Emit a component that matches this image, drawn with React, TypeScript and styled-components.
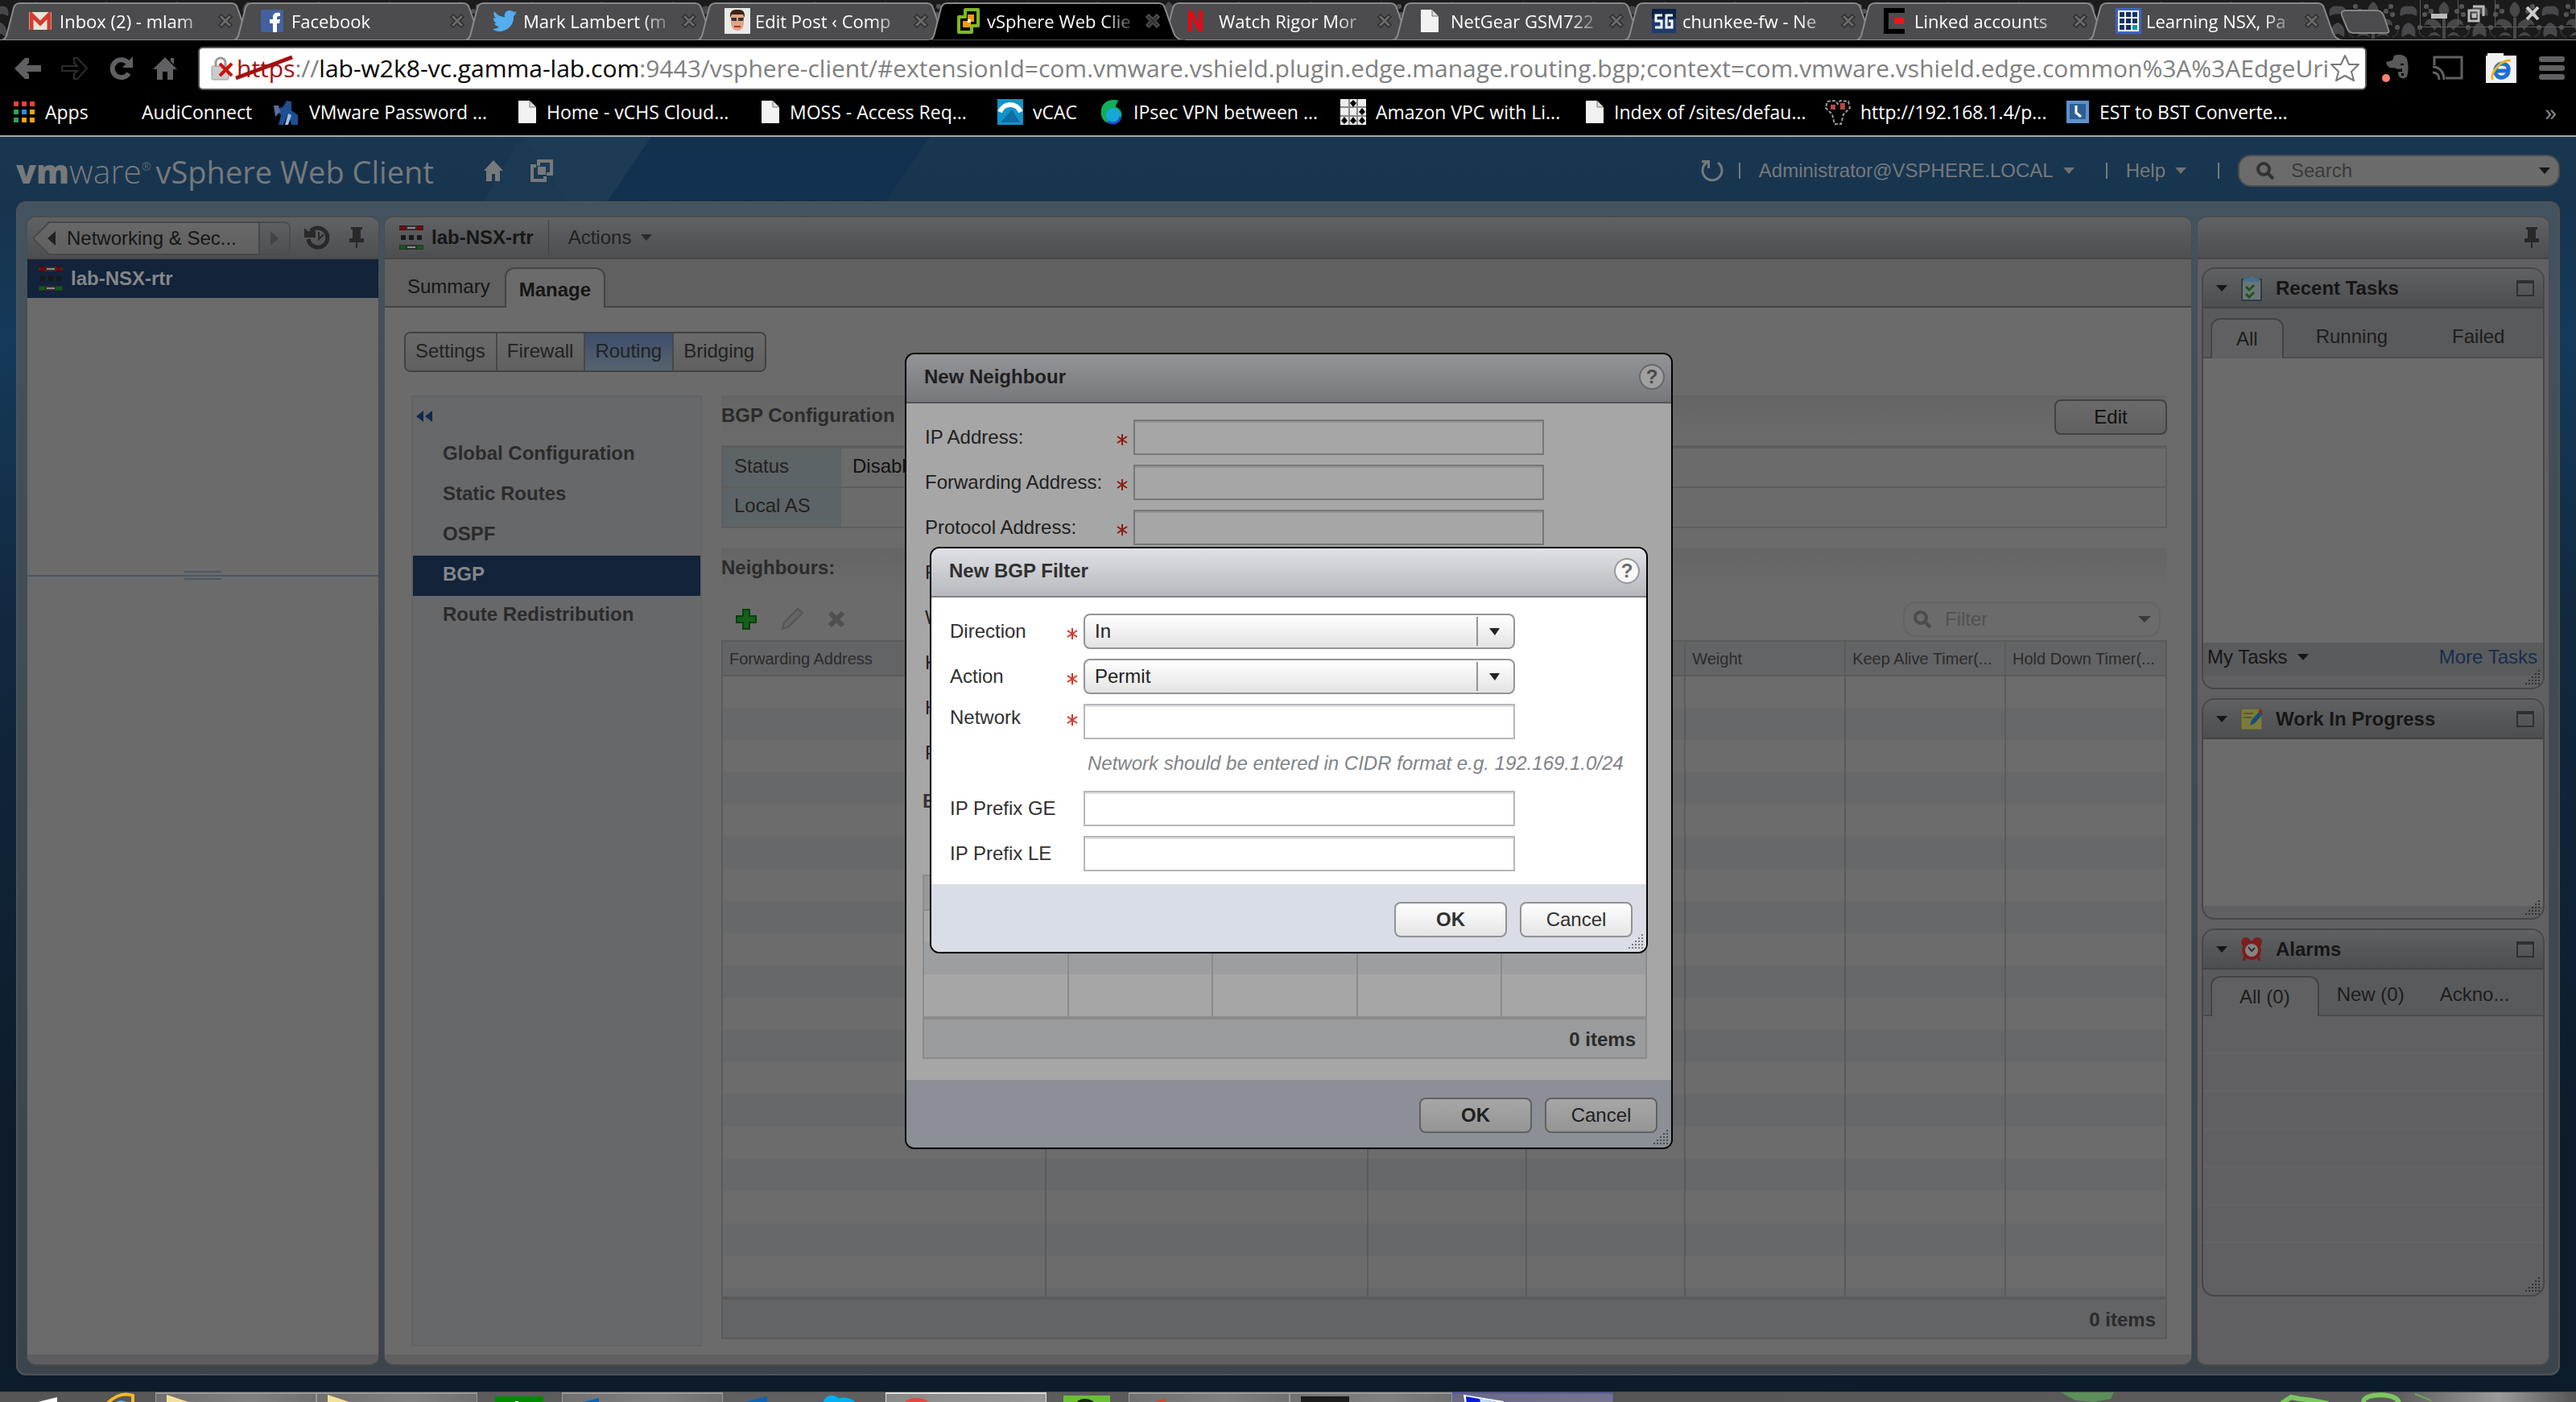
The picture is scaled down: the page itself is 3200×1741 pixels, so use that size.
import React from "react";
import styled, { createGlobalStyle, css } from "styled-components";

const ui = `"Liberation Sans", Arial, sans-serif`;
const chrome = `"Open Sans", "Noto Sans", sans-serif`;

const Global = createGlobalStyle`
  *, *::before, *::after { box-sizing: border-box; }
  body { margin: 0; background: #000; font: 24px/28px ${ui}; color: #161616; overflow: hidden; }
  button, input, select { font: inherit; color: inherit; }
  button { background: none; border: 0; padding: 0; }
  a { text-decoration: none; color: inherit; }
  svg { display: block; flex: none; }
`;

/* ---------- browser window ---------- */

const Page = styled.div`
  height: 100vh;
  display: flex;
  flex-direction: column;
`;

const Strip = styled.header`
  position: relative;
  height: 50px;
  padding: 2px 0 0 10px;
  display: flex;
  background: #1b1b1c;
  border-bottom: 1px solid #8e8e8e;
  font: 22px/30px ${chrome};
  color: #fff;
`;

const Damask = styled.svg`
  position: absolute;
  inset: 0;
  width: 100%;
  height: 49px;
`;

const Tabs = styled.nav`
  position: relative;
  flex: 1;
  min-width: 0;
  display: flex;
`;

const TabItem = styled.button<{ $on?: boolean }>`
  position: relative;
  flex: 1 1 0;
  min-width: 0;
  height: 48px;
  padding: 0 4px 0 26px;
  display: flex;
  align-items: center;
  text-align: left;
  z-index: ${(p) => (p.$on ? 2 : 1)};
`;

const TabShape = styled.svg`
  position: absolute;
  left: -8px;
  top: 0;
  width: calc(100% + 30px);
  height: 48px;
`;

const TabIcon = styled.span`
  position: relative;
  width: 38px;
`;

const TabLabel = styled.span`
  position: relative;
  flex: 1;
  overflow: hidden;
  white-space: nowrap;
  mask-image: linear-gradient(90deg, #000 80%, rgba(0, 0, 0, 0.2));
`;

const TabClose = styled.span`
  position: relative;
  margin-left: 14px;
  width: 24px;
`;

const StripEnd = styled.div`
  position: relative;
  width: 310px;
  flex: none;
  display: flex;
  justify-content: space-between;
  padding: 9px 0 0 18px;
`;

const WindowButtons = styled.div`
  display: flex;
  width: 194px;
  height: 34px;
  margin-top: -11px;
  border: 1px solid #5a5a5c;
  border-top: 0;
`;

const WindowButton = styled.button`
  flex: 1;
  display: grid;
  place-items: center;
  & + & { border-left: 1px solid #5a5a5c; }
  &:last-child { flex: 2; padding-right: 8px; }
`;

const Toolbar = styled.div`
  height: 70px;
  display: flex;
  align-items: center;
  padding: 0 14px 0 14px;
  background: #000;
`;

const NavButtons = styled.div`
  width: 232px;
  flex: none;
  display: flex;
  gap: 20px;
`;

const Omnibox = styled.div`
  flex: 1;
  min-width: 0;
  height: 54px;
  padding: 0 6px 0 14px;
  display: flex;
  align-items: center;
  background: #fff;
  border: 2px solid #555;
  border-radius: 6px;
  font: 30px/40px ${chrome};
  color: #808080;
`;

const Url = styled.span`
  flex: 1;
  margin-left: 4px;
  white-space: nowrap;
`;

const Bad = styled.span`
  position: relative;
  color: #a40f10;
`;

const Slash = styled.svg`
  position: absolute;
  left: -2px;
  top: 4px;
`;

const Host = styled.span`
  color: #000;
`;

const Extensions = styled.div`
  width: 246px;
  flex: none;
  padding-left: 18px;
  display: flex;
  align-items: center;
  justify-content: space-between;
`;

const Bookmarks = styled.nav`
  height: 50px;
  padding: 0 24px 10px 16px;
  display: flex;
  align-items: center;
  background: #000;
  border-bottom: 2px solid #a9a9a9;
  font: 23px/30px ${chrome};
  color: #fff;
`;

const Bookmark = styled.a<{ $w: number }>`
  width: ${(p) => p.$w}px;
  display: flex;
  align-items: center;
  gap: 12px;
  white-space: nowrap;
`;

const More = styled.span`
  margin-left: auto;
  font-size: 30px;
  color: #888;
`;

/* ---------- vSphere client ---------- */

const Client = styled.div`
  position: relative;
  flex: 1;
  min-height: 0;
  display: flex;
  flex-direction: column;
  padding: 0 20px 20px;
  background: linear-gradient(#1a3751, #17344f 6%, #143a5a 16%, #12273d 40%, #0c1c2b 80%);
`;

const Rays = styled.svg`
  position: absolute;
  left: 0;
  top: 0;
`;

const ClientBar = styled.div`
  position: relative;
  height: 80px;
  padding-top: 4px;
  display: flex;
  align-items: center;
  color: #77797b;
`;

const Logo = styled.div`
  display: flex;
  align-items: baseline;
  font: 300 41px/60px ${chrome};
  width: 581px;
`;

const LogoBold = styled.b`
  font-weight: 800;
`;

const LogoMark = styled.sup`
  align-self: flex-start;
  padding-top: 15px;
  margin-right: 6px;
  font-size: 14px;
  line-height: 20px;
`;

const LogoName = styled.span`
  font-size: 38px;
  font-weight: 500;
  white-space: nowrap;
`;

const BarIcons = styled.div`
  display: flex;
  gap: 34px;
`;

const BarRight = styled.div`
  margin-left: auto;
  display: flex;
  align-items: center;
`;

const Sep = styled.span<{ $near?: boolean }>`
  width: 2px;
  height: 20px;
  margin: 0 23px 0 ${(p) => (p.$near ? 18 : 39)}px;
  background: #77797b;
`;

const MenuButton = styled.button`
  display: flex;
  align-items: center;
  gap: 12px;
`;

const SearchBox = styled.label`
  width: 400px;
  height: 40px;
  padding: 0 10px 0 20px;
  display: flex;
  align-items: center;
  gap: 20px;
  background: #6b6b6b;
  border: 2px solid #4a4d50;
  border-radius: 16px;
`;

const BareInput = styled.input`
  flex: 1;
  min-width: 0;
  height: 30px;
  padding: 0;
  border: 0;
  outline: 0;
  background: none;
  &::placeholder { color: ${(p) => p.color || "#3b3b3b"}; opacity: 1; }
`;

const Frame = styled.div`
  position: relative;
  flex: 1;
  min-height: 0;
  display: grid;
  grid-template-columns: 438px minmax(0, 1fr) 438px;
  gap: 6px;
  padding: 16px 11px 10px;
  border: 2px solid #505355;
  border-radius: 12px;
  background: linear-gradient(#43535f, #3e4850 60%, #3c454c);
`;

const Panel = styled.section<{ $bg: string; $foot: string }>`
  min-height: 0;
  display: flex;
  flex-direction: column;
  overflow: hidden;
  border: 2px solid #4b4c4d;
  border-radius: 12px;
  background: ${(p) => p.$bg};
  border-left-width: 1px;
  border-right-width: 1px;
  &::after { content: ""; height: 12px; flex: none; background: ${(p) => p.$foot}; }
`;

const PanelHead = styled.div`
  height: 52px;
  flex: none;
  display: flex;
  align-items: center;
  border-bottom: 2px solid #474747;
  background: linear-gradient(#616265, #4d4e50);
`;

const BackButton = styled.button`
  position: relative;
  width: 283px;
  height: 42px;
  margin: 2px 0 0 6px;
  padding-left: 43px;
  text-align: left;
  background: linear-gradient(#686868, #606060);
  border: 2px solid #484848;
  border-left: 0;
  clip-path: polygon(20px 0, 100% 0, 100% 100%, 20px 100%, 0 50%);
`;

const BackArrow = styled.svg`
  position: absolute;
  left: 0;
  top: -2px;
`;

const NextButton = styled.button`
  width: 38px;
  height: 42px;
  margin-top: 2px;
  display: grid;
  place-items: center;
  border: 2px solid #4c4c4c;
  border-left: 0;
  border-radius: 0 8px 8px 0;
`;

const HeadIcons = styled.div`
  display: flex;
  align-items: center;
  gap: 22px;
  margin-left: 17px;
`;

const TreeRow = styled.a`
  height: 48px;
  flex: none;
  padding-left: 14px;
  display: flex;
  align-items: center;
  gap: 10px;
  background: #12233a;
  color: #858789;
  font-weight: bold;
`;

const TreeSpace = styled.div`
  height: 346px;
  border-bottom: 2px solid #4a5767;
`;

const Grip = styled.svg`
  align-self: center;
  margin-top: -7px;
`;

const Fill = styled.div`
  flex: 1;
  min-height: 0;
`;

const ObjectTitle = styled.h1`
  margin: 0;
  padding: 0 18px;
  height: 42px;
  display: flex;
  align-items: center;
  gap: 10px;
  font: bold 24px/28px ${ui};
  border-right: 1px solid #404040;
`;

const Actions = styled(MenuButton)`
  margin-left: 24px;
  color: #222;
`;

const MainTabs = styled.nav`
  height: 60px;
  flex: none;
  display: flex;
  align-items: flex-end;
  padding-left: 10px;
  background: #606060;
  box-shadow: inset 0 -2px #444;
`;

const MainTab = styled.button<{ $on?: boolean }>`
  height: 50px;
  ${(p) =>
    p.$on
      ? css`
          padding: 3px 16px 0;
          font-weight: bold;
          background: #6b6b6b;
          border: 2px solid #444;
          border-bottom: 0;
          border-radius: 12px 12px 0 0;
        `
      : css`
          padding: 0 18px 3px;
        `}
`;

const MainBody = styled.div`
  flex: 1;
  min-height: 0;
  display: flex;
  flex-direction: column;
  padding: 30px 30px 10px 24px;
`;

const Segments = styled.div`
  align-self: flex-start;
  height: 50px;
  flex: none;
  display: flex;
  border: 2px solid #414141;
  border-radius: 8px;
  overflow: hidden;
`;

const Segment = styled.button<{ $on?: boolean }>`
  padding: 0 13px 3px 12px;
  color: #222;
  background: ${(p) => (p.$on ? "linear-gradient(#3e4d6c, #56646f)" : "linear-gradient(#6b6b6b, #606060)")};
  & + & { border-left: 2px solid #484848; }
`;

const Split = styled.div`
  flex: 1;
  min-height: 0;
  display: grid;
  grid-template-columns: 361px minmax(0, 1fr);
  gap: 24px;
  margin: 29px 0 0 9px;
`;

const Side = styled.nav`
  background: #67686a;
  border: 2px solid #626366;
  font-weight: bold;
  color: #2b2b2b;
`;

const Collapse = styled.button`
  display: block;
  height: 47px;
  padding: 0 4px;
`;

const SideLink = styled.a<{ $on?: boolean }>`
  height: 50px;
  padding: 0 37px 4px;
  display: flex;
  align-items: center;
  ${(p) => p.$on && "background: #12233a; color: #858789;"}
`;

const Content = styled.div`
  min-height: 0;
  margin-bottom: 9px;
  display: flex;
  flex-direction: column;
`;

const Band = styled.div`
  height: 58px;
  flex: none;
  display: flex;
  justify-content: space-between;
  align-items: flex-start;
  background: linear-gradient(#656565, #6b6b6b);
`;

const BandTitle = styled.h2`
  margin: 0;
  padding-top: 11px;
  font: bold 24px/28px ${ui};
  color: #2b2b2b;
`;

const EditButton = styled.button`
  width: 140px;
  height: 44px;
  margin-top: 5px;
  background: linear-gradient(#6b6b6b, #606060);
  border: 2px solid #424242;
  border-radius: 8px;
  color: #111;
`;

const InfoTable = styled.table`
  width: 100%;
  flex: none;
  margin: 4px 0 24px;
  border-collapse: collapse;
  border: 2px solid #5e5e5e;
  border-top-width: 4px;
  th { width: 148px; background: #5c6467; font-weight: normal; color: #222; }
  td { color: #111; }
  th, td { height: 50px; padding: 0 13px 4px 14px; text-align: left; border-bottom: 2px solid #5e5e5e; }
`;

const Tools = styled.div`
  height: 57px;
  flex: none;
  display: flex;
  align-items: center;
  padding: 5px 8px 0 18px;
`;

const ToolButtons = styled.div`
  display: flex;
  gap: 30px;
  align-items: center;
  margin-right: auto;
`;

const FilterBox = styled.label`
  width: 320px;
  height: 44px;
  padding: 0 10px 0 10px;
  display: flex;
  align-items: center;
  gap: 16px;
  border: 2px solid #646464;
  border-radius: 16px;
`;

const GridBox = styled.div<{ $line: string }>`
  flex: 1;
  min-height: 0;
  overflow: hidden;
  border: 2px solid ${(p) => p.$line};
  border-bottom: 0;
`;

const Grid = styled.table<{ $line: string; $head: string; $odd: string; $even: string }>`
  width: 100%;
  table-layout: fixed;
  border-collapse: collapse;
  th {
    height: 42px;
    padding: 0 8px;
    font: 20px/24px ${ui};
    text-align: left;
    white-space: nowrap;
    overflow: hidden;
    color: #2b2b2b;
    background: ${(p) => p.$head};
    border-bottom: 2px solid ${(p) => p.$line};
  }
  td { height: 40px; padding: 0; background: ${(p) => p.$odd}; }
  tr:nth-child(even) td { background: ${(p) => p.$even}; }
  th + th, td + td { border-left: 2px solid ${(p) => p.$line}; }
`;

const GridFoot = styled.div<{ $line: string; $bg: string }>`
  height: 53px;
  flex: none;
  padding: 3px 12px 0;
  display: flex;
  align-items: center;
  justify-content: flex-end;
  font-weight: bold;
  color: #2b2b2b;
  background: ${(p) => p.$bg};
  border: 2px solid ${(p) => p.$line};
  border-top-width: 4px;
`;

/* ---------- right column ---------- */

const Portlets = styled.div`
  flex: 1;
  min-height: 0;
  display: flex;
  flex-direction: column;
  gap: 11px;
  padding: 10px 5px;
`;

const Portlet = styled.section<{ $h: number }>`
  position: relative;
  height: ${(p) => p.$h}px;
  flex: none;
  display: flex;
  flex-direction: column;
  overflow: hidden;
  border: 2px solid #474748;
  border-radius: 16px;
  background: #606062;
`;

const PortletHead = styled.div`
  height: 49px;
  flex: none;
  display: flex;
  align-items: center;
  padding: 0 11px 0 16px;
  background: linear-gradient(#606163, #4d4e50);
  border-bottom: 2px solid #444;
`;

const PortletTitle = styled.h3`
  margin: 0 auto 0 16px;
  font: bold 24px/28px ${ui};
`;

const HeadTriangle = styled.span`
  width: 30px;
`;

const PortletTabs = styled.nav<{ $h: number }>`
  height: ${(p) => p.$h}px;
  flex: none;
  display: flex;
  align-items: flex-end;
  padding-left: 9px;
  background: #595a5c;
  box-shadow: inset 0 -2px #4c4c4c;
`;

const PortletTab = styled.button<{ $on?: boolean; $pad: number }>`
  height: 50px;
  padding: 0 ${(p) => p.$pad}px 4px;
  color: #1d1d1d;
  ${(p) =>
    p.$on &&
    css`
      padding-bottom: 0;
      background: #606062;
      border: 2px solid #444;
      border-bottom: 0;
      border-radius: 12px 12px 0 0;
    `}
`;

const PortletBody = styled.div`
  flex: 1;
  background: #6b6b6b;
`;

const AlarmBody = styled.div`
  flex: 1;
  background: repeating-linear-gradient(#606062 0 45px, #646466 45px 47px);
  max-height: 284px;
`;

const TaskFoot = styled.div`
  height: 41px;
  flex: none;
  display: flex;
  justify-content: space-between;
  align-items: flex-start;
  padding: 4px 7px 0 5px;
  background: #5a5b5d;
`;

const MoreTasks = styled.a`
  color: #172e4d;
`;

const PortletEdge = styled.div`
  height: 15px;
  flex: none;
`;

const Corner = styled.svg`
  position: absolute;
  right: 4px;
  bottom: 4px;
`;

/* ---------- dialogs ---------- */

const Layer = styled.div<{ $top: number }>`
  position: absolute;
  inset: 0;
  padding: ${(p) => p.$top}px 0 0 2px;
  display: flex;
  justify-content: center;
  align-items: flex-start;
`;

const Dialog = styled.form<{ $dim?: boolean; $w: number }>`
  position: relative;
  width: ${(p) => p.$w}px;
  border: 2px solid #000;
  border-radius: 12px;
  overflow: hidden;
  color: ${(p) => (p.$dim ? "#1f1f1f" : "#303030")};
  background: ${(p) => (p.$dim ? "#a6a6a6" : "#fff")};
`;

const DialogHead = styled.div<{ $dim?: boolean }>`
  height: 61px;
  display: flex;
  justify-content: space-between;
  align-items: center;
  padding: 0 8px 3px 22px;
  background: ${(p) => (p.$dim ? "linear-gradient(#939498, #77787c)" : "linear-gradient(#e0e1e6, #b7b8bd)")};
  border-bottom: 2px solid ${(p) => (p.$dim ? "#545557" : "#808184")};
`;

const DialogTitle = styled.h2`
  margin: 0;
  font: bold 24px/28px ${ui};
`;

const Help = styled.button<{ $dim?: boolean }>`
  width: 32px;
  height: 32px;
  border-radius: 50%;
  border: 2px solid ${(p) => (p.$dim ? "#66676a" : "#9a9a9c")};
  background: ${(p) => (p.$dim ? "#a0a0a1" : "#f7f7f7")};
  font-weight: bold;
  color: ${(p) => (p.$dim ? "#4a4a4a" : "#6c6c6c")};
`;

const Fields = styled.div`
  padding: 20px 23px 4px;
`;

const Field = styled.div<{ $label: number; $wide: number }>`
  height: 56px;
  display: grid;
  grid-template-columns: ${(p) => p.$label}px 21px ${(p) => p.$wide}px;
  align-items: start;
  white-space: nowrap;
`;

const Label = styled.label<{ $high?: boolean }>`
  padding-top: ${(p) => (p.$high ? 3 : 8)}px;
`;

const Star = styled.svg<{ $high?: boolean }>`
  margin-top: ${(p) => (p.$high ? 13 : 18)}px;
`;

const TextBox = styled.input<{ $dim?: boolean }>`
  width: 100%;
  height: 44px;
  padding: 0 12px;
  outline: 0;
  background: ${(p) => (p.$dim ? "#a6a6a6" : "#fff")};
  border: 2px solid ${(p) => (p.$dim ? "#767778" : "#b5b8bb")};
  box-shadow: inset 0 2px ${(p) => (p.$dim ? "#939393" : "#e2e2e2")};
`;

const Picker = styled.div`
  position: relative;
  height: 44px;
`;

const PickerSelect = styled.select`
  width: 100%;
  height: 44px;
  padding: 0 60px 0 12px;
  appearance: none;
  outline: 0;
  color: #222;
  background: linear-gradient(#fff, #e3e3e3);
  border: 2px solid #929497;
  border-radius: 8px;
`;

const PickerArrow = styled.svg`
  position: absolute;
  right: 0;
  top: 0;
  pointer-events: none;
`;

const Hint = styled.p`
  margin: 4px 0 20px 171px;
  font-style: italic;
  white-space: nowrap;
  color: #7f8388;
`;

const DialogFoot = styled.div<{ $dim?: boolean }>`
  height: 84px;
  display: flex;
  justify-content: flex-end;
  align-items: flex-start;
  gap: 16px;
  padding: 22px 17px 0;
  background: ${(p) => (p.$dim ? "#8c8f95" : "#d9dde6")};
`;

const DialogButton = styled.button<{ $dim?: boolean; $main?: boolean }>`
  width: 140px;
  height: 44px;
  border: 2px solid ${(p) => (p.$dim ? "#606163" : "#919396")};
  border-radius: 8px;
  font-weight: ${(p) => (p.$main ? "bold" : "normal")};
  background: ${(p) => (p.$dim ? "linear-gradient(#a6a6a6, #959595)" : "linear-gradient(#fff, #e4e4e4)")};
`;

const FilterTitle = styled.h3`
  margin: 12px 0 73px -3px;
  font: bold 24px/28px ${ui};
  color: #3a3235;
`;

const FilterGrid = styled.div`
  margin: 0 30px 0 20px;
  padding-bottom: 26px;
  tbody tr:last-child td { height: 52px; }
`;

/* ---------- taskbar ---------- */

const Taskbar = styled.footer`
  position: relative;
  height: 13px;
  flex: none;
  display: flex;
  overflow: hidden;
  background: linear-gradient(90deg, #555, #606060 30%, #555 60%, #5c5c5c 93%, #9a9a9a 97%, #555);
  border-top: 1px solid #4a4a4a;
`;

const Slot = styled.button<{ $w: number; $tile?: string; $line?: string }>`
  width: ${(p) => p.$w}px;
  height: 40px;
  flex: none;
  display: flex;
  align-items: flex-start;
  padding-left: 13px;
  ${(p) =>
    p.$tile &&
    css`
      background: ${p.$tile};
      border: 1px solid ${p.$line};
      border-top-width: 2px;
    `}
`;

const Splatter = styled.svg`
  margin-left: auto;
`;

/* ---------- drawings ---------- */

const Tri = ({ c = "#6f7173", w = 14 }: { c?: string; w?: number }) => (
  <svg width={w} height="8" viewBox="0 0 14 8" preserveAspectRatio="none"><path d="M0 0h14L7 8z" fill={c} /></svg>
);

const Cross = ({ on }: { on?: boolean }) => (
  <svg width="20" height="20" viewBox="0 0 20 20">
    <path d="M3 3l14 14M17 3L3 17" stroke={on ? "#555" : "#2c2c2c"} strokeWidth="6" />
    <path d="M4 4l12 12M16 4L4 16" stroke={on ? "#333" : "#6a6a6a"} strokeWidth="3" />
  </svg>
);

const PageIcon = () => (
  <svg width="24" height="28" viewBox="0 0 24 28">
    <path d="M1 0h14l8 8v20H1z" fill="#f2f2f2" /><path d="M15 0v8h8z" fill="#ddd" stroke="#777" />
  </svg>
);

const Magnifier = ({ c }: { c: string }) => (
  <svg width="24" height="24" viewBox="0 0 24 24" fill="none" stroke={c}>
    <circle cx="10" cy="10" r="7" strokeWidth="4" /><path d="M15 15l7 7" strokeWidth="4" />
  </svg>
);

const RouterIcon = () => (
  <svg width="30" height="30" viewBox="0 0 30 30">
    <path d="M0 0h30v6H0zM0 24h30v6H0z" fill="#2f2f2f" />
    <path d="M2 1h6v4H2zM22 1h6v4h-6z" fill="#760808" /><path d="M0 0h8v1H0zM22 0h8v1h-8zM0 5h8v1H0zM22 5h8v1h-8z" fill="#4c0808" /><path d="M10 2h10v2H10z" fill="#8a8a8a" />
    <path d="M2 12h6v6H2zM12 12h6v6h-6zM22 12h6v6h-6z" fill="#1a1a1a" />
    <path d="M1 25h7v4H1zM22 25h7v4h-7z" fill="#08600c" /><path d="M10 26h10v2H10z" fill="#8a8a8a" />
  </svg>
);

const PinIcon = () => (
  <svg width="18" height="26" viewBox="0 0 18 26"><path d="M2 0h14v3h-2v11h4v5h-8v7H8v-7H0v-5h4V3H2z" fill="#292929" /></svg>
);

const MaxIcon = () => (
  <svg width="22" height="20" viewBox="0 0 22 20"><path d="M1 2h20v17H1z" fill="none" stroke="#303030" strokeWidth="2" /><path d="M0 0h22v4H0z" fill="#303030" /></svg>
);

const Dots = ({ c }: { c: string }) => (
  <>
    {[0, 1, 2, 3, 4].flatMap((r) =>
      Array.from({ length: r + 1 }, (_, k) => <rect key={`${r}${k}`} x={16 - k * 4} y={r * 4} width="2" height="2" fill={c} />),
    )}
  </>
);

const StarMark = ({ dim, high }: { dim?: boolean; high?: boolean }) => (
  <Star $high={high} width="14" height="14" viewBox="0 0 14 14" stroke={dim ? "#8c1c14" : "#d5382b"} strokeWidth="2">
    <path d="M7 0v14M1 3l12 8M13 3L1 11" />
  </Star>
);

const Damasks = () => (
  <Damask>
    <defs>
      <pattern id="damask" width="88" height="50" patternUnits="userSpaceOnUse">
        <g fill="#48484a">
          <path d="M44 2c-8 6-9 14 0 20 9-6 8-14 0-20zM42 22h4v26h-4zM40 30c-8-10-20-8-20 2 4-4 10 0 12 6 2-4 6-6 8-2zM48 30c8-10 20-8 20 2-4-4-10 0-12 6-2-4-6-6-8-2z" />
          <path d="M24 46c4-8 12-8 16 0-6-3-11-3-16 0zM64 46c-4-8-12-8-16 0 6-3 11-3 16 0zM0 8c8-2 12 4 10 12C6 18 2 16 0 18zM88 8c-8-2-12 4-10 12 4-2 8-4 10-2zM0 28c6 2 10 8 8 18-4-2-6-4-8-4zM88 28c-6 2-10 8-8 18 4-2 6-4 8-4z" />
        </g>
        <g fill="#565658">
          <circle cx="22" cy="8" r="3" /><circle cx="28" cy="14" r="3" /><circle cx="20" cy="18" r="3" /><circle cx="66" cy="8" r="3" /><circle cx="60" cy="14" r="3" /><circle cx="68" cy="18" r="3" /><circle cx="14" cy="34" r="3" /><circle cx="74" cy="34" r="3" />
        </g>
        <path d="M22 8l6 6-8 4M66 8l-6 6 8 4M14 34c-2 6 0 10 6 12M74 34c2 6 0 10-6 12" fill="none" stroke="#444" strokeWidth="1" />
      </pattern>
    </defs>
    <rect width="100%" height="49" fill="url(#damask)" />
  </Damask>
);

const Fav: Record<string, React.ReactNode> = {
  gmail: <svg width="28" height="22" viewBox="0 0 28 22"><path d="M0 0h28v22H0z" fill="#e8e4d8" /><path d="M3 22V3l11 11L25 3v19" fill="none" stroke="#d33c30" strokeWidth="5" /></svg>,
  fb: <svg width="28" height="28" viewBox="0 0 28 28"><rect width="28" height="28" rx="2" fill="#4460a0" /><path d="M15 28V17h-4v-5h4V9c0-4 3-6 9-5v4c-4 0-4 0-4 4h4l-1 5h-3v11z" fill="#fff" /></svg>,
  tw: <svg width="30" height="26" viewBox="0 0 30 26"><path d="M30 3l-4 4c1 12-9 19-18 19-3 0-6-1-8-3 4 0 6-1 8-3-3 0-5-2-6-4h3C2 15 1 12 1 9l3 1C1 7 1 4 2 1c4 5 8 7 13 7-1-5 2-8 6-8 2 0 4 1 5 2l4-1-3 3z" fill="#55acee" /></svg>,
  face: <svg width="32" height="32" viewBox="0 0 32 32"><path d="M0 0h32v32H0z" fill="#e9e9e9" /><path d="M8 6c4-4 12-4 16 0v12c0 7-4 10-8 10s-8-3-8-10z" fill="#e0a684" /><path d="M7 12C6 2 12 2 16 2s10 0 9 10l-2-4H9z" fill="#3a2516" /><path d="M8 12h7v4H9zM17 12h7l-1 4h-6z" fill="#333" /><path d="M12 22h8v2h-8z" fill="#a33" /></svg>,
  vs: <svg width="30" height="32" viewBox="0 0 30 32"><path d="M11 2h16v20h-8v8H3V11h8z" fill="none" stroke="#7db924" strokeWidth="4" strokeLinejoin="round" /><path d="M14 8h8v9h-4v7H8v-8h6z" fill="#f79a12" /><path d="M14 14h4v4h-4z" fill="#fff" /></svg>,
  nf: <svg width="18" height="26" viewBox="0 0 18 26"><path d="M0 0h5l8 17V0h5v26h-5L5 9v17H0z" fill="#e50914" /></svg>,
  page: <PageIcon />,
  sg: <svg width="30" height="30" viewBox="0 0 30 30"><path d="M0 0h30v30H0z" fill="#1c3c70" /><path d="M0 0h30v12H0z" fill="#0c2144" /><path d="M13 8H5v7h7v8H4M26 8h-8v15h7v-8h-4" fill="none" stroke="#fff" strokeWidth="3" /></svg>,
  link: <svg width="30" height="32" viewBox="0 0 30 32"><path d="M26 3H3v26h23" fill="none" stroke="#000" strokeWidth="6" /><path d="M13 12h12v8H13z" fill="#f01414" /></svg>,
  grid: <svg width="32" height="32" viewBox="0 0 32 32"><path d="M0 0h32v32H0z" fill="#3c63c4" /><path d="M3 3h26v26H3z" fill="#fff" /><path d="M5 5h6v6H5zM13 5h6v6h-6zM21 5h6v6h-6zM5 13h6v6H5zM13 13h6v6h-6zM21 13h6v6h-6zM5 21h6v6H5zM13 21h6v6h-6z" fill="#0f2f66" /><path d="M21 21h6v6h-6z" fill="#139a9a" /></svg>,
};

const tabs: [string, string][] = [
  ["gmail", "Inbox (2) - mlam"],
  ["fb", "Facebook"],
  ["tw", "Mark Lambert (m"],
  ["face", "Edit Post ‹ Comp"],
  ["vs", "vSphere Web Clie"],
  ["nf", "Watch Rigor Mor"],
  ["page", "NetGear GSM722"],
  ["sg", "chunkee-fw - Ne"],
  ["link", "Linked accounts"],
  ["grid", "Learning NSX, Pa"],
];

const marks: [string, number, React.ReactNode][] = [
  ["Apps", 124, <svg width="28" height="28" viewBox="0 0 28 28"><path d="M1 1h6v6H1zM11 1h6v6h-6zM21 1h6v6h-6z" fill="#ea4335" /><path d="M1 11h6v6H1zM1 21h6v6H1z" fill="#34a058" /><path d="M11 11h6v6h-6z" fill="#2a8cf0" /><path d="M21 11h6v6h-6zM11 21h6v6h-6zM21 21h6v6h-6z" fill="#f5a30a" /></svg>],
  ["AudiConnect", 200, <svg width="24" height="28" />],
  ["VMware Password ...", 303, <svg width="32" height="32" viewBox="0 0 32 32"><path d="M16 2l6 1v11l8 6v12h-8l-4-14-6 14H6l3-12-6-8 8-2 3-4z" fill="#1d4f91" /><path d="M18 18l4 2-4 12h-4z" fill="#9fc0e8" /><path d="M0 8h6l2 8-6 6z" fill="#5a6f9a" /></svg>],
  ["Home - vCHS Cloud...", 302, <PageIcon />],
  ["MOSS - Access Req...", 294, <PageIcon />],
  ["vCAC", 127, <svg width="32" height="32" viewBox="0 0 32 32"><path d="M0 0h32v32H0z" fill="#1294c8" /><path d="M3 16C8 4 24 4 29 16" fill="none" stroke="#fff" strokeWidth="6" /><path d="M4 29l14-16 10 16z" fill="#0b6fa4" /></svg>],
  ["IPsec VPN between ...", 299, <svg width="30" height="32" viewBox="0 0 30 32"><path d="M24 2C8-2 0 8 2 20c2 10 14 14 22 8 6-6 4-16-4-18 0-4 2-6 4-8z" fill="#0fae5a" /><circle cx="17" cy="20" r="9" fill="#18a8d8" /><path d="M10 28c6 4 14 2 16-6" stroke="#1f4bd0" strokeWidth="3" fill="none" /></svg>],
  ["Amazon VPC with Li...", 304, <svg width="32" height="32" viewBox="0 0 32 32"><path d="M0 0h32v32H0z" fill="#eee" /><path d="M0 10h32M0 21h32M11 0v32M21 0v32" stroke="#888" strokeWidth="2" /><path d="M16 1l4 4-4 5-4-5zM27 11l4 5-4 4-4-4zM5 22l4 5-4 4-4-4zM16 22l4 5-4 4-4-4zM27 22l4 5-4 4-4-4z" fill="#000" /></svg>],
  ["Index of /sites/defau...", 298, <PageIcon />],
  ["http://192.168.1.4/p...", 299, <svg width="32" height="32" viewBox="0 0 32 32" fill="none" stroke="#9a9a9a" strokeWidth="2"><path d="M3 3l10-1 3 4 3-4 10 1 2 8-8 8-3 12h-8L9 19 1 11z" strokeDasharray="4 2" /><path d="M8 8h4v4H8zM20 6h4v6h-4z" fill="#b84646" stroke="#b84646" /></svg>],
  ["EST to BST Converte...", 300, <svg width="30" height="32" viewBox="0 0 30 32"><path d="M1 2h28v28H1z" fill="#5d92c9" /><path d="M5 6h20v19H5z" fill="#2d5f96" /><path d="M13 8v9l6 5" stroke="#fff" strokeWidth="3" fill="none" /></svg>],
];

const Browser = () => (
  <>
    <Strip>
      <Damasks />
      <Tabs>
        {tabs.map(([icon, label]) => {
          const on = icon === "vs";
          return (
            <TabItem key={label} $on={on}>
              <TabShape viewBox="0 0 318 48" preserveAspectRatio="none">
                <path
                  d="M0 48c4-1 6-4 7-9L15 8c1-4 3-6 8-6h262c5 0 7 2 8 6l11 31c2 5 5 8 12 9z"
                  fill={on ? "#000" : "#4c4c4e"}
                  stroke="#8a8a8c"
                  strokeWidth="2"
                />
                {on && <path d="M0 49h318" stroke="#000" strokeWidth="3" />}
              </TabShape>
              <TabIcon>{Fav[icon]}</TabIcon>
              <TabLabel>{label}</TabLabel>
              <TabClose><Cross on={on} /></TabClose>
            </TabItem>
          );
        })}
      </Tabs>
      <StripEnd>
        <svg width="62" height="32" viewBox="0 0 62 32"><path d="M6 2h38c5 0 7 2 9 6l6 18c1 3 0 4-3 4H16c-4 0-6-1-8-5L1 8c-1-4 1-6 5-6z" fill="#4c4c4e" stroke="#858585" strokeWidth="2" /></svg>
        <WindowButtons>
          <WindowButton aria-label="Minimise"><svg width="20" height="20" viewBox="0 0 20 20"><path d="M0 10h20v6H0z" fill="#bbb" /></svg></WindowButton>
          <WindowButton aria-label="Restore"><svg width="22" height="22" viewBox="0 0 22 22" fill="none" stroke="#bbb" strokeWidth="3"><path d="M2 7h12v13H2zM7 2h13v12M7 12h3v3H7z" /></svg></WindowButton>
          <WindowButton aria-label="Close window"><svg width="18" height="18" viewBox="0 0 18 18"><path d="M2 1l14 15M16 1L2 16" stroke="#ccc" strokeWidth="4" /></svg></WindowButton>
        </WindowButtons>
      </StripEnd>
    </Strip>
    <Toolbar>
      <NavButtons>
        <button aria-label="Back"><svg width="40" height="32" viewBox="0 0 40 32"><path d="M4 16L17 3h5v6l-3 3h18v8H19l3 3v6h-5z" fill="#606062" /></svg></button>
        <button aria-label="Forward"><svg width="40" height="32" viewBox="0 0 40 32"><path d="M34 16L22 3h-4v6l4 4H3v6h19l-4 4v6h4z" fill="none" stroke="#2d2d2d" strokeWidth="2" /></svg></button>
        <button aria-label="Reload"><svg width="34" height="32" viewBox="0 0 34 32"><path d="M26 22a11 11 0 1 1-1-13" fill="none" stroke="#606062" strokeWidth="6" /><path d="M31 1v14H18z" fill="#606062" /></svg></button>
        <button aria-label="Home"><svg width="34" height="32" viewBox="0 0 34 32"><path d="M17 2l15 15h-5v13h-7V20h-6v10H7V17H2zM24 3h4v8l-4-4z" fill="#606062" /></svg></button>
      </NavButtons>
      <Omnibox>
        <svg width="28" height="32" viewBox="0 0 28 32"><path d="M6 14V9c0-8 12-8 12 0v5" fill="none" stroke="#999" strokeWidth="3" /><rect x="1" y="13" width="21" height="17" rx="2" fill="#ccc" stroke="#999" /><path d="M11 10l15 15M26 10L11 25" stroke="#c11" strokeWidth="4" /></svg>
        <Url role="textbox" aria-label="Address">
          <Bad>https<Slash width="74" height="32" viewBox="0 0 74 32"><path d="M1 29L71 3" stroke="#a40f10" strokeWidth="5" /></Slash></Bad>://<Host>lab-w2k8-vc.gamma-lab.com</Host>:9443/vsphere-client/#extensionId=com.vmware.vshield.plugin.edge.manage.routing.bgp;context=com.vmware.vshield.edge.common%3A%3AEdgeUri
        </Url>
        <svg width="38" height="36" viewBox="0 0 38 36"><path d="M19 2l5 11h12l-9 9 3 11-11-6-11 6 3-11-9-9h12z" fill="#fff" stroke="#777" strokeWidth="2" strokeLinejoin="round" /></svg>
      </Omnibox>
      <Extensions>
        <svg width="34" height="36" viewBox="0 0 34 36"><path d="M6 10l8-2 2-6c6-2 14-1 16 4 2 8 2 16 0 22-4 5-12 2-11-6h5v-4c-6 2-8 0-9-1-6 2-10-2-11-7z" fill="#5a5a5c" /><path d="M24 12h4v2h-4zM25 24h3v3h-3z" fill="#000" /><circle cx="6" cy="30" r="5" fill="#f9826c" /></svg>
        <svg width="40" height="32" viewBox="0 0 40 32" fill="none" stroke="#606062" strokeWidth="3"><path d="M4 12V2h34v26H18M2 14c8 0 14 6 14 16M2 21c5 0 8 3 8 9" /></svg>
        <svg width="38" height="38" viewBox="0 0 38 38"><path d="M0 3h2V0h20v3h16v34H0z" fill="#f1f1f1" /><path d="M28 24c-2 5-7 7-11 6-8-3-7-16 3-17 6 0 9 4 8 9H14" fill="none" stroke="#1c6fd0" strokeWidth="5" /><path d="M8 33C6 24 18 8 31 9" fill="none" stroke="#f0b41e" strokeWidth="3" /></svg>
        <svg width="32" height="30" viewBox="0 0 32 30"><rect width="32" height="7" rx="3" fill="#606062" /><rect y="11" width="32" height="7" rx="3" fill="#606062" /><rect y="22" width="32" height="7" rx="3" fill="#606062" /></svg>
      </Extensions>
    </Toolbar>
    <Bookmarks>
      {marks.map(([label, w, icon]) => (
        <Bookmark key={label} $w={w} href="#">{icon}{label}</Bookmark>
      ))}
      <More>»</More>
    </Bookmarks>
  </>
);

const TopBar = () => (
  <ClientBar>
    <Logo>
      <LogoBold>vm</LogoBold>ware<LogoMark>®</LogoMark>
      <LogoName>vSphere Web Client</LogoName>
    </Logo>
    <BarIcons>
      <svg width="24" height="28" viewBox="0 0 24 28"><path d="M12 1l12 13h-4v13h-6v-9h-4v9H3V14H0z" fill="#77797b" /></svg>
      <svg width="28" height="28" viewBox="0 0 28 28" fill="none" stroke="#77797b" strokeWidth="4"><path d="M10 8V2h16v16h-6" /><path d="M7 8H2v18h16v-5" /><path d="M10 18v-8h8v8z" fill="#77797b" strokeWidth="2" /></svg>
    </BarIcons>
    <BarRight>
      <svg width="30" height="30" viewBox="0 0 30 30"><path d="M22 5a12 12 0 1 1-14 0" fill="none" stroke="#77797b" strokeWidth="3" /><path d="M2 2h10v10H9V6L2 5z" fill="#77797b" /></svg>
      <Sep $near />
      <MenuButton>Administrator@VSPHERE.LOCAL <Tri /></MenuButton>
      <Sep />
      <MenuButton>Help <Tri /></MenuButton>
      <Sep />
      <SearchBox>
        <Magnifier c="#333" />
        <BareInput placeholder="Search" aria-label="Search" />
        <Tri c="#161616" />
      </SearchBox>
    </BarRight>
  </ClientBar>
);

const LINE = "#5b5b5b";
const cols = ["Forwarding Address", "", "", "", "Weight", "Keep Alive Timer(...", "Hold Down Timer(..."];

const Center = () => (
  <Panel $bg="#6b6b6b" $foot="#606060">
    <PanelHead>
      <ObjectTitle><RouterIcon />lab-NSX-rtr</ObjectTitle>
      <Actions>Actions <Tri c="#2b2b2b" /></Actions>
    </PanelHead>
    <MainTabs>
      <MainTab>Summary</MainTab>
      <MainTab $on>Manage</MainTab>
    </MainTabs>
    <MainBody>
      <Segments>
        <Segment>Settings</Segment>
        <Segment>Firewall</Segment>
        <Segment $on>Routing</Segment>
        <Segment>Bridging</Segment>
      </Segments>
      <Split>
        <Side>
          <Collapse aria-label="Collapse"><svg width="20" height="14" viewBox="0 0 20 14"><path d="M9 0v14L0 7zM20 0v14l-9-7z" fill="#12294a" /></svg></Collapse>
          {["Global Configuration", "Static Routes", "OSPF", "BGP", "Route Redistribution"].map((t) => (
            <SideLink key={t} href="#" $on={t === "BGP"}>{t}</SideLink>
          ))}
        </Side>
        <Content>
          <Band>
            <BandTitle>BGP Configuration</BandTitle>
            <EditButton>Edit</EditButton>
          </Band>
          <InfoTable>
            <tbody>
              <tr><th scope="row">Status</th><td>Disabled</td></tr>
              <tr><th scope="row">Local AS</th><td /></tr>
            </tbody>
          </InfoTable>
          <Band><BandTitle>Neighbours:</BandTitle></Band>
          <Tools>
            <ToolButtons>
              <button aria-label="Add"><svg width="26" height="26" viewBox="0 0 26 26"><path d="M9 1h8v8h8v8h-8v8H9v-8H1V9h8z" fill="#15601a" stroke="#0b3f10" strokeWidth="2" /></svg></button>
              <button aria-label="Edit neighbour"><svg width="28" height="28" viewBox="0 0 28 28"><path d="M2 26l2-8L21 1l6 5L10 23z" fill="#666" stroke="#555" strokeWidth="2" /></svg></button>
              <button aria-label="Delete"><svg width="22" height="20" viewBox="0 0 22 20"><path d="M3 2l16 16M19 2L3 18" stroke="#505050" strokeWidth="6" /></svg></button>
            </ToolButtons>
            <FilterBox>
              <Magnifier c="#4c4c4c" />
              <BareInput placeholder="Filter" aria-label="Filter" color="#525252" />
              <Tri c="#3a3a3a" w={16} />
            </FilterBox>
          </Tools>
          <GridBox $line={LINE}>
            <Grid $line={LINE} $head="#636466" $odd="#6c6c6c" $even="#67686a">
              <colgroup>
                <col width="22.4%" /><col width="22.3%" /><col width="11%" /><col width="11%" /><col width="11.1%" /><col width="11.1%" /><col width="11.1%" />
              </colgroup>
              <thead><tr>{cols.map((c, i) => <th key={i}>{c}</th>)}</tr></thead>
              <tbody>{Array.from({ length: 20 }, (_, r) => <tr key={r}>{cols.map((_c, i) => <td key={i} />)}</tr>)}</tbody>
            </Grid>
          </GridBox>
          <GridFoot $line={LINE} $bg="#636466">0 items</GridFoot>
        </Content>
      </Split>
    </MainBody>
  </Panel>
);

const HeadRow = ({ icon, title }: { icon: React.ReactNode; title: string }) => (
  <PortletHead>
    <HeadTriangle><Tri c="#161616" /></HeadTriangle>
    {icon}
    <PortletTitle>{title}</PortletTitle>
    <button aria-label={`Maximise ${title}`}><MaxIcon /></button>
  </PortletHead>
);

const Right = () => (
  <Panel $bg="#606062" $foot="#606062">
    <PanelHead><Fill /><PinIcon /><svg width="12" height="8" /></PanelHead>
    <Portlets>
      <Portlet $h={524}>
        <HeadRow
          title="Recent Tasks"
          icon={<svg width="28" height="32" viewBox="0 0 28 32"><path d="M2 5h24v26H2z" fill="#6c7475" stroke="#2f3d44" strokeWidth="2" /><path d="M4 8V4h6l4-4 4 4h6v4z" fill="#43718a" /><path d="M7 14l4 4 6-6M7 23l4 4 6-6" fill="none" stroke="#17571c" strokeWidth="3" /></svg>}
        />
        <PortletTabs $h={62}>
          <PortletTab $on $pad={30}>All</PortletTab>
          <PortletTab $pad={40}>Running</PortletTab>
          <PortletTab $pad={40}>Failed</PortletTab>
        </PortletTabs>
        <PortletBody />
        <TaskFoot><MenuButton>My Tasks <Tri c="#161616" /></MenuButton><MoreTasks href="#">More Tasks</MoreTasks></TaskFoot>
        <PortletEdge />
        <Corner width="18" height="18"><Dots c="#333" /></Corner>
      </Portlet>
      <Portlet $h={275}>
        <HeadRow
          title="Work In Progress"
          icon={<svg width="28" height="28" viewBox="0 0 28 28"><path d="M1 1h26v26H1z" fill="#7d7a3e" stroke="#55553a" /><path d="M4 7h12M4 12h10" stroke="#5e5b30" strokeWidth="2" /><path d="M12 22l2-7L24 4l4 4-10 11z" fill="#17507a" /><path d="M22 4l3-3 3 4-2 3z" fill="#7c3030" /></svg>}
        />
        <PortletBody />
        <PortletEdge />
        <Corner width="18" height="18"><Dots c="#333" /></Corner>
      </Portlet>
      <Portlet $h={457}>
        <HeadRow
          title="Alarms"
          icon={<svg width="28" height="30" viewBox="0 0 28 30"><circle cx="7" cy="6" r="6" fill="#7c1f1f" /><circle cx="21" cy="6" r="6" fill="#7c1f1f" /><path d="M4 22l4 2-2 5H3zM24 22l-4 2 2 5h3z" fill="#7c1f1f" /><circle cx="14" cy="16" r="10" fill="#858585" stroke="#7c1f1f" strokeWidth="4" /><path d="M10 12l4 5 4-4" fill="none" stroke="#2b2b2b" strokeWidth="2" /></svg>}
        />
        <PortletTabs $h={58}>
          <PortletTab $on $pad={34}>All (0)</PortletTab>
          <PortletTab $pad={22}>New (0)</PortletTab>
          <PortletTab $pad={22}>Ackno...</PortletTab>
        </PortletTabs>
        <AlarmBody />
        <Corner width="18" height="18"><Dots c="#333" /></Corner>
      </Portlet>
    </Portlets>
  </Panel>
);

const Left = () => (
  <Panel $bg="#6b6b6b" $foot="#5e5e60">
    <PanelHead>
      <BackButton>
        <BackArrow width="30" height="42" viewBox="0 0 30 42"><path d="M21 1L1 21l20 20" fill="none" stroke="#484848" strokeWidth="2" /><path d="M29 12v18L19 21z" fill="#222" /></BackArrow>
        Networking &amp; Sec...
      </BackButton>
      <NextButton aria-label="Next"><svg width="10" height="18" viewBox="0 0 10 18"><path d="M0 0v18l10-9z" fill="#444" /></svg></NextButton>
      <HeadIcons>
        <svg width="34" height="32" viewBox="0 0 34 32" fill="none" stroke="#292929"><path d="M8 8a12 12 0 1 1-3 10" strokeWidth="5" /><path d="M0 4l4 4h10v8H0z" fill="#292929" stroke="none" /><path d="M18 9v9l6-6" strokeWidth="2" /></svg>
        <PinIcon />
      </HeadIcons>
    </PanelHead>
    <TreeRow href="#"><RouterIcon />lab-NSX-rtr</TreeRow>
    <TreeSpace />
    <Grip width="46" height="12" viewBox="0 0 46 12"><path d="M0 0h46v2H0zM0 9h46v2H0z" fill="#4a5767" /></Grip>
    <Fill />
  </Panel>
);

const Buttons = ({ dim }: { dim?: boolean }) => (
  <DialogFoot $dim={dim}>
    <DialogButton type="button" $dim={dim} $main>OK</DialogButton>
    <DialogButton type="button" $dim={dim}>Cancel</DialogButton>
    <Corner width="18" height="18"><Dots c={dim ? "#4a4c50" : "#777a80"} /></Corner>
  </DialogFoot>
);

const NeighbourDialog = () => (
  <Layer $top={268}>
    <Dialog $dim $w={954} aria-label="New Neighbour">
      <DialogHead $dim><DialogTitle>New Neighbour</DialogTitle><Help type="button" $dim>?</Help></DialogHead>
      <Fields>
        {["IP Address:", "Forwarding Address:", "Protocol Address:", "Remote AS:", "Weight:", "Keep Alive Time:", "Hold Down Time:", "Password:"].map((t, i) => (
          <Field key={t} $label={238} $wide={510}>
            <Label htmlFor={`n${i}`}>{t}</Label>
            <StarMark dim />
            <TextBox id={`n${i}`} $dim />
          </Field>
        ))}
        <FilterTitle>BGP Filters:</FilterTitle>
      </Fields>
      <FilterGrid>
        <GridBox $line="#8b8b8b">
          <Grid $line="#8b8b8b" $head="#97989a" $odd="#a6a6a6" $even="#9b9fa2">
            <thead><tr>{[0, 1, 2, 3, 4].map((i) => <th key={i} />)}</tr></thead>
            <tbody>{[0, 1, 2].map((r) => <tr key={r}>{[0, 1, 2, 3, 4].map((i) => <td key={i} />)}</tr>)}</tbody>
          </Grid>
        </GridBox>
        <GridFoot $line="#8b8b8b" $bg="#9a9b9c">0 items</GridFoot>
      </FilterGrid>
      <Buttons dim />
    </Dialog>
  </Layer>
);

const FilterDialog = () => {
  const select = (id: string, label: string, value: string) => (
    <Field $label={145} $wide={536}>
      <Label htmlFor={id}>{label}</Label>
      <StarMark />
      <Picker>
        <PickerSelect id={id}><option>{value}</option></PickerSelect>
        <PickerArrow width="48" height="44" viewBox="0 0 48 44"><path d="M1 4v36" stroke="#929497" strokeWidth="2" /><path d="M16 18h13l-6 9z" fill="#222" /></PickerArrow>
      </Picker>
    </Field>
  );
  const text = (id: string, label: string, star?: boolean) => (
    <Field $label={145} $wide={536}>
      <Label htmlFor={id} $high={star}>{label}</Label>
      {star ? <StarMark high /> : <span />}
      <TextBox id={id} />
    </Field>
  );
  return (
    <Layer $top={509}>
      <Dialog $w={892} aria-label="New BGP Filter">
        <DialogHead><DialogTitle>New BGP Filter</DialogTitle><Help type="button">?</Help></DialogHead>
        <Fields>
          {select("direction", "Direction", "In")}
          {select("action", "Action", "Permit")}
          {text("network", "Network", true)}
          <Hint>Network should be entered in CIDR format e.g. 192.169.1.0/24</Hint>
          {text("ge", "IP Prefix GE")}
          {text("le", "IP Prefix LE")}
        </Fields>
        <Buttons />
      </Dialog>
    </Layer>
  );
};

const gray = "linear-gradient(90deg, #707070, #808080 60%, #707070)";

const Dock = () => (
  <Taskbar>
    <Slot $w={96} aria-label="Start"><svg width="60" height="14"><path d="M34 12l24-6v8H34z" fill="#fff" /></svg></Slot>
    <Slot $w={97} aria-label="Internet Explorer"><svg width="60" height="14"><path d="M24 14C34 4 44 0 56 4v8" fill="none" stroke="#f5b928" strokeWidth="4" /><path d="M34 14c2-5 12-5 16 0z" fill="#5ab4f0" /></svg></Slot>
    <Slot $w={200} $tile={gray} $line="#999" aria-label="Folder"><svg width="40" height="14"><path d="M0 1l36 12H0z" fill="#f4e29a" /></svg></Slot>
    <Slot $w={200} $tile={gray} $line="#999" aria-label="Folder"><svg width="40" height="14"><path d="M0 1l36 12H0z" fill="#f4e29a" /></svg></Slot>
    <Slot $w={105} aria-label="Store"><svg width="72" height="14"><path d="M9 5h60v9H9z" fill="#008a00" /><path d="M34 11h4v3h-4z" fill="#fff" /></svg></Slot>
    <Slot $w={200} $tile={gray} $line="#999" aria-label="Outlook"><svg width="40" height="14"><path d="M4 12L32 5v9H4z" fill="#0a64b8" /></svg></Slot>
    <Slot $w={102} aria-label="Lync"><svg width="60" height="14"><path d="M14 12l28-7v9H14z" fill="#0a64b8" /></svg></Slot>
    <Slot $w={100} aria-label="Skype"><svg width="60" height="14"><path d="M10 14c0-12 14-12 18-7 10-2 20 1 22 7z" fill="#00aff0" /></svg></Slot>
    <Slot $w={200} $tile="linear-gradient(90deg, #8a8a8a, #989898)" $line="#ddd" aria-label="Chrome"><svg width="60" height="14"><path d="M8 14C10 2 38 2 42 14z" fill="#e2473f" /></svg></Slot>
    <Slot $w={102} aria-label="Evernote"><svg width="80" height="14"><path d="M8 4h58v10H8z" fill="#6bbf35" /><path d="M24 14c2-8 18-8 24 0z" fill="#142a0c" /></svg></Slot>
    <Slot $w={200} $tile={gray} $line="#999" aria-label="PowerPoint"><svg width="60" height="14"><path d="M6 13l26-7v8H6z" fill="#d24726" /></svg></Slot>
    <Slot $w={202} $tile={gray} $line="#999" aria-label="Terminal"><svg width="70" height="14"><path d="M0 3h60v11H0z" fill="#1c1c1c" /></svg></Slot>
    <Slot $w={200} $tile="linear-gradient(90deg, #6a6a86, #74748c)" $line="#5a5ab0" aria-label="Remote Desktop"><svg width="60" height="14"><path d="M0 1l50 8v5H2z" fill="#fff" /><path d="M3 3l44 8v3H4z" fill="#0a1ce0" /><path d="M20 6l26 5v3H22z" fill="#bfe4ff" /></svg></Slot>
    <Splatter width="700" height="14" viewBox="0 0 700 14"><path d="M60 0h66l-4 8-20 4-24-2z" fill="#5c8f5a" /><path d="M334 14l12-8 10 2 16 2 20 4M436 12c0-12 44-12 44 2" fill="none" stroke="#7cc860" strokeWidth="6" /><path d="M500 2l20 8" stroke="#6aa85a" strokeWidth="2" /></Splatter>
  </Taskbar>
);

export default function App() {
  return (
    <>
      <Global />
      <Page>
        <Browser />
        <Client>
          <Rays width="1300" height="98" viewBox="0 0 1300 98">
            <path d="M648 0h161l-66 98h-26z" fill="#1d3b55" />
            <path d="M648 0L590 98h127z" fill="#1b3953" />
            <path d="M809 0h346l-66 98H743z" fill="#12314f" />
          </Rays>
          <TopBar />
          <Frame>
            <Left />
            <Center />
            <Right />
          </Frame>
          <NeighbourDialog />
          <FilterDialog />
        </Client>
        <Dock />
      </Page>
    </>
  );
}
